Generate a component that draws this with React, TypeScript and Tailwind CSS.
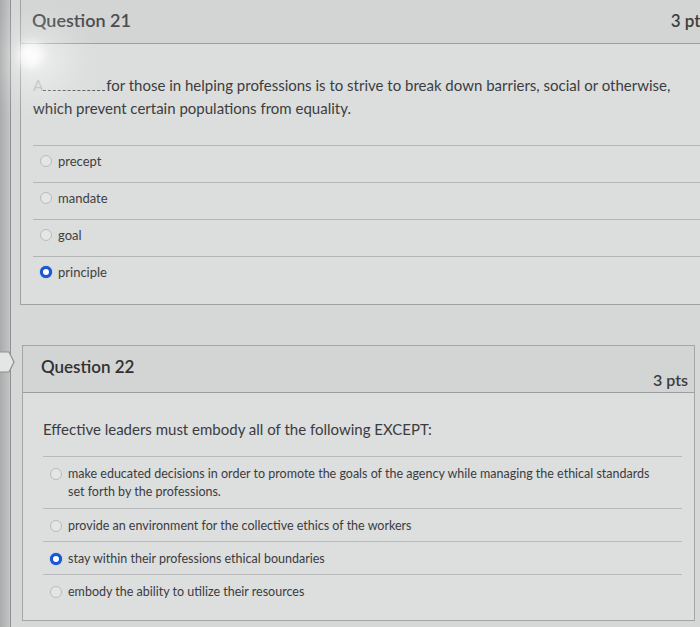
import React from "react";

const Radio = ({ checked }: { checked?: boolean }) =>
  checked ? (
    <span className="block w-[12px] h-[12px] rounded-full border-[3px] border-[#1a56d6] bg-white shrink-0 shadow-[0_0_1px_#1a56d6]" />
  ) : (
    <span className="block w-[12px] h-[12px] rounded-full border border-[#b9bcbd] bg-[#e4e5e5] shrink-0" />
  );

const Opt21 = ({ label, checked, last }: { label: string; checked?: boolean; last?: boolean }) => (
  <div className={`h-[37px] flex items-start gap-[6px] pl-[7px] pt-[6px] ${last ? "" : "border-b border-[#b3b5b6]"}`}>
    <span className="flex h-[18px] items-center">
      <Radio checked={checked} />
    </span>
    <span className="text-[13px] leading-[18px] text-[#3d3f41]">{label}</span>
  </div>
);

const Opt22 = ({
  children,
  checked,
  last,
  h,
}: {
  children: React.ReactNode;
  checked?: boolean;
  last?: boolean;
  h: string;
}) => (
  <div className={`${h} flex items-start gap-[6px] pl-[7px] pt-[8px] ${last ? "" : "border-b border-[#b8babb]"}`}>
    <span className="flex h-[18px] items-center">
      <Radio checked={checked} />
    </span>
    <span className="text-[12.5px] leading-[18px] text-[#3a3c3e] max-w-[600px]">{children}</span>
  </div>
);

export default function App() {
  return (
    <div
      className="w-[700px] h-[627px] overflow-hidden relative flex bg-[#d6d7d7]"
      style={{ fontFamily: "Lato, 'Open Sans', sans-serif" }}
    >
      {/* left bezel strip */}
      <div className="w-[11px] shrink-0 bg-gradient-to-r from-[#a9abac] to-[#c4c6c6] border-r border-[#8f9192]" />

      <div className="flex-1 flex flex-col">
        {/* Question 21 */}
        <div className="ml-[9px] w-[700px] shrink-0 h-[305px] border-l border-b border-[#9fa1a2] bg-[#dcdddd] flex flex-col">
          <div className="h-[44px] shrink-0 bg-[#d3d4d4] border-b border-[#9c9e9f] flex items-center justify-between pl-[11px] pr-[12px]">
            <span className="text-[18px] font-semibold text-[#4a4c4e] -mt-[3px]">Question 21</span>
            <span className="text-[17px] font-semibold text-[#3c3e40] -mt-[2px]">3 pts</span>
          </div>
          <div className="pl-[12px] pt-[30px] w-[680px]">
            <p className="text-[15px] leading-[23px] text-[#3b3d3f]">
              <span className="text-[#b6b8b9]">A</span>
              <span className="inline-block w-[62px] border-b border-dashed border-[#5a5c5e] mr-[1px]" />
              for those in helping professions is to strive to break down barriers, social or otherwise, which prevent
              certain populations from equality.
            </p>
            <div className="mt-[25px] border-t border-[#b3b5b6]">
              <Opt21 label="precept" />
              <Opt21 label="mandate" />
              <Opt21 label="goal" />
              <Opt21 label="principle" checked last />
            </div>
          </div>
        </div>

        {/* Question 22 */}
        <div className="mt-[40px] ml-[11px] w-[673px] h-[276px] border border-[#a3a5a6] bg-[#dddede] flex flex-col">
          <div className="h-[47px] shrink-0 bg-[#d3d4d4] border-b border-[#9c9e9f] flex justify-between pl-[18px] pr-[6px]">
            <span className="text-[17px] font-semibold text-[#2f3133] mt-[8px]">Question 22</span>
            <span className="text-[16px] font-semibold text-[#3a3c3e] mt-[22px]">3 pts</span>
          </div>
          <div className="pl-[20px] pr-[12px] pt-[26px]">
            <p className="text-[15px] text-[#3a3c3e] leading-[20px]">Effective leaders must embody all of the following EXCEPT:</p>
            <div className="mt-[17px] border-t border-[#b8babb]">
              <Opt22 h="h-[52px]">
                make educated decisions in order to promote the goals of the agency while managing the ethical standards
                set forth by the professions.
              </Opt22>
              <Opt22 h="h-[33px]">provide an environment for the collective ethics of the workers</Opt22>
              <Opt22 h="h-[33px]" checked>
                stay within their professions ethical boundaries
              </Opt22>
              <Opt22 h="h-[40px]" last>
                embody the ability to utilize their resources
              </Opt22>
            </div>
          </div>
        </div>
      </div>

      {/* question flag marker on left edge */}
      <svg className="absolute left-0 top-[351px]" width="16" height="22" viewBox="0 0 16 22">
        <path d="M0 1 H9 L14 11 L9 21 H0" fill="#e4e5e5" stroke="#8d8f90" strokeWidth="1.2" />
      </svg>

      {/* glare */}
      <div className="absolute left-[18px] top-[42px] w-[26px] h-[26px] rounded-full bg-white blur-[5px] opacity-90 pointer-events-none" />
      <div className="absolute left-[8px] top-[30px] w-[60px] h-[60px] rounded-full bg-white blur-[18px] opacity-50 pointer-events-none" />
    </div>
  );
}
